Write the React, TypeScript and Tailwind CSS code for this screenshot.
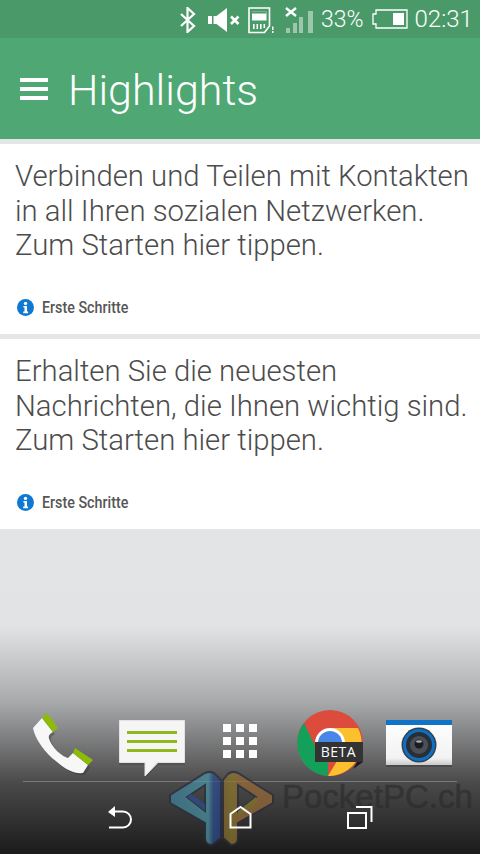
const roboto = "font-['Roboto',sans-serif]";

function InfoIcon() {
  return (
    <svg width="17" height="17" viewBox="0 0 17 17">
      <circle cx="8.5" cy="8.5" r="8.5" fill="#0f78d2" />
      <circle cx="8.5" cy="4.4" r="1.7" fill="#fff" />
      <path d="M6.4 7h3.6v5.6h1.1v1.6H6.2v-1.6h1.3V8.6H6.4z" fill="#fff" />
    </svg>
  );
}

function Card({ lines }: { lines: string[] }) {
  return (
    <div className="flex h-[190px] flex-col bg-white pl-[15px] pt-[15px]">
      <div className="text-[29.3px] font-light leading-[34.5px] text-[#4c4c4c]">
        {lines.map((l) => (
          <div key={l} className="whitespace-nowrap">{l}</div>
        ))}
      </div>
      <div className="mt-auto mb-[17px] flex items-center pl-[2px]">
        <InfoIcon />
        <span className="ml-[8px] origin-left scale-x-[0.84] whitespace-nowrap text-[17px] font-medium leading-[20px] text-[#565656]">
          Erste Schritte
        </span>
      </div>
    </div>
  );
}

function StatusBar() {
  return (
    <div className="flex h-[38px] items-center bg-[#4a9a69] pl-[179px] text-[24px] leading-none text-white">
      <svg width="17" height="26" viewBox="0 0 17 26" className="mr-[12px] mt-[2px]" fill="none" stroke="#fff" strokeWidth="2.2">
        <path d="M2 7l13 12-6.500 6V1l6.500 6L2 19" />
      </svg>
      <svg width="33" height="26" viewBox="0 0 33 26" className="mr-[7px] mt-[2px]" fill="#fff">
        <path d="M0 9h4v8H0zM5.500 9h3L19 1v24L8.500 17h-3z" />
        <path d="M23 9.500l7.500 7.500M30.500 9.500L23 17" stroke="#fff" strokeWidth="2.600" />
      </svg>
      <svg width="28" height="27" viewBox="0 0 28 27" className="mr-[9px] mt-[2px]" fill="none">
        <path d="M1 1h20.500v18l-5 6.500H1z" stroke="#fff" strokeWidth="1.600" />
        <path d="M4 4.500h14.500v9H4z" fill="#fff" />
        <path d="M4 4.500h14.500v2H4z" fill="#4a9a69" />
        <path d="M5 17h1.600v5H5zM8.500 17h1.600v5H8.500zM12 17h1.600v5H12zM15.500 17h1.600v4H15.500z" fill="#fff" />
        <path d="M24 19.500h1.500v3.500H24zM24 24h1.500v2H24z" fill="#fff" />
      </svg>
      <svg width="30" height="26" viewBox="0 0 30 26" className="mr-[5px] mt-[1px]" fill="#fff">
        <path d="M1 1l10 8M11 1L1 9" stroke="#fff" strokeWidth="2.400" />
        <path d="M1 21h4v5H1zM8 16h4v10H8zM14 10h4v16h-4zM23 4h5v22h-5z" fill="#9cc7ad" />
      </svg>
      <span className={`${roboto} ml-[1px] mr-[8px] text-[23px] font-light`}>33%</span>
      <svg width="36" height="20" viewBox="0 0 36 20" className="mr-[7px]" fill="none">
        <path d="M4 1h31v18H4v-4H1V5h3z" stroke="#fff" strokeWidth="1.300" />
        <path d="M21 4h11v12H21z" fill="#fff" />
      </svg>
      <span className={`${roboto} font-light`}>02:31</span>
    </div>
  );
}

function Phone() {
  const body = "M9 5L0 15C2 26 12 40 24 49C33 57 42 61 50 60L55 52L40 40L35 45C28 43 20 35 17 28C15 24 15 22 20 19Z";
  return (
    <svg width="60" height="60" viewBox="0 0 60 60" className="overflow-visible">
      <path d={body} fill="#333" opacity=".4" transform="translate(2 2)" />
      <path d={body} fill="#f7f7f7" />
      <path d="M14 0L25 15L20 19L9 5z" fill="#8cbb08" />
      <path d="M42 35L60 47L55 52L40 40z" fill="#8cbb08" />
    </svg>
  );
}

function Message() {
  return (
    <svg width="66" height="56" viewBox="0 0 66 56" className="overflow-visible">
      <path d="M0 2h66v43H39L26 58V45H0z" fill="#444" opacity=".45" />
      <path d="M0.500 0.500h65v42H39L26 56V42.500H0.500z" fill="#f5f5f5" stroke="#e2e2e2" />
      <path d="M8 11h50v3H8zM8 20h50v3H8zM8 29h50v3H8z" fill="#8fb81a" />
    </svg>
  );
}

function AppGrid() {
  return (
    <div className="grid grid-cols-3 gap-[5px]">
      {Array.from({ length: 9 }).map((_, i) => (
        <div key={i} className="h-[8px] w-[8px] bg-white" />
      ))}
    </div>
  );
}

function Chrome() {
  return (
    <div className="relative h-[66px] w-[66px]">
      <svg width="66" height="66" viewBox="0 0 66 66">
        <circle cx="33" cy="33" r="33" fill="#dc4b3c" />
        <path d="M33 18H61A33 33 0 0 1 31 66L46 41z" fill="#fbc02d" />
        <path d="M7 13L20 40 31 45 23 64.500A33 33 0 0 1 7 13z" fill="#12a05a" />
        <path d="M20 40L31 46 31 66 23 64.500z" fill="#12a05a" />
        <path d="M60 52L66 52 56 59z" fill="#1a1a1a" />
        <circle cx="33" cy="33" r="15" fill="#fff" />
        <circle cx="33" cy="33" r="12" fill="#4a86e8" />
      </svg>
      <div className="absolute left-[18px] top-[32px] flex h-[20px] w-[48px] items-center justify-center bg-[#333333] font-['Open_Sans',sans-serif] text-[14px] leading-none tracking-[0.5px] text-white">
        BETA
      </div>
    </div>
  );
}

function Camera() {
  return (
    <svg width="66" height="46" viewBox="0 0 66 46" className="overflow-visible">
      <defs>
        <linearGradient id="cam" x1="0" y1="0" x2="0" y2="1">
          <stop offset="0" stopColor="#ffffff" />
          <stop offset=".85" stopColor="#f2f2f2" />
          <stop offset="1" stopColor="#c8c8c8" />
        </linearGradient>
      </defs>
      <rect x="0" y="2" width="66" height="45" fill="#333" opacity=".45" />
      <rect width="66" height="45" fill="url(#cam)" />
      <rect width="66" height="5" fill="#0f74c7" />
      <circle cx="33" cy="25" r="17.500" fill="#33404e" />
      <circle cx="33" cy="25" r="16" fill="#0e70c4" />
      <circle cx="33" cy="25" r="13" fill="#2a2f36" />
      <circle cx="33" cy="25" r="9" fill="#4b5058" />
      <circle cx="33" cy="24" r="4.500" fill="#1a1c20" />
      <ellipse cx="33" cy="21.500" rx="3" ry="1.200" fill="#a8aeb6" />
    </svg>
  );
}

function Watermark() {
  return (
    <div className="pointer-events-none absolute left-[150px] top-[760px] flex items-start">
      <svg width="144" height="94" viewBox="0 0 144 94" opacity=".72">
        <defs>
          <linearGradient id="bl" x1="0" y1="0" x2="1" y2="0">
            <stop offset="0" stopColor="#3f7f99" />
            <stop offset=".75" stopColor="#4b96a4" />
            <stop offset=".85" stopColor="#2d4f8f" />
            <stop offset="1" stopColor="#2b468a" />
          </linearGradient>
          <linearGradient id="br" x1="0" y1="0" x2="1" y2="0">
            <stop offset="0" stopColor="#8a6a30" />
            <stop offset=".18" stopColor="#8c7a2c" />
            <stop offset=".32" stopColor="#9a6b35" />
            <stop offset="1" stopColor="#9a6a38" />
          </linearGradient>
        </defs>
        <path fillRule="evenodd" d="M20 35L55 13Q62 10 66 15L71 20V78L62 85Q55 85 55 78V63L20 43zM37 37L55 51V25z" fill="url(#bl)" stroke="#2a2f3d" strokeWidth="2" />
        <path d="M37 37L55 51V44L41 34z" fill="#2c4c8e" />
        <path fillRule="evenodd" d="M123 35L88 13Q81 10 77 15L73 20V78L81 85Q88 85 88 78V63L123 43zM106 37L88 51V25z" fill="url(#br)" stroke="#2a2f3d" strokeWidth="2" />
        <path d="M106 37L88 51V57L108 43z" fill="#8c7a2c" />
      </svg>
      <span className="ml-[-12px] mt-[17px] whitespace-nowrap font-['Liberation_Sans',sans-serif] text-[33px] font-normal leading-[40px] text-[#2a2a2a] opacity-60 [-webkit-text-stroke:0.6px_#2a2a2a]">
        PocketPC.ch
      </span>
    </div>
  );
}

export default function App() {
  return (
    <div className={`${roboto} relative flex h-[854px] w-[480px] flex-col overflow-hidden bg-[#e4e5e7]`}>
      <StatusBar />
      <div className="flex h-[101px] items-center bg-[#4fa873] pl-[20px] text-white">
        <div className="flex flex-col gap-[5px]">
          <div className="h-[4px] w-[28px] bg-white" />
          <div className="h-[4px] w-[28px] bg-white" />
          <div className="h-[4px] w-[28px] bg-white" />
        </div>
        <span className="ml-[20px] pt-[3px] text-[43px] font-light leading-none">Highlights</span>
      </div>
      <div className="mt-[5px] flex flex-col gap-[5px]">
        <Card lines={["Verbinden und Teilen mit Kontakten", "in all Ihren sozialen Netzwerken.", "Zum Starten hier tippen."]} />
        <Card lines={["Erhalten Sie die neuesten", "Nachrichten, die Ihnen wichtig sind.", "Zum Starten hier tippen."]} />
      </div>
      <div className="mt-auto flex h-[325px] flex-col justify-end bg-[linear-gradient(to_bottom,#e3e4e6_0%,#e2e3e5_30%,#a9aaac_53%,#4a4a4a_78%,#1b1b1b_100%)]">
        <div className="grid h-[71px] grid-cols-5 items-start pl-[18px] pr-[17px]">
          <div className="flex justify-center pt-[3px]"><Phone /></div>
          <div className="flex justify-center pt-[10px]"><Message /></div>
          <div className="flex justify-center pt-[14px] pr-[1px]"><AppGrid /></div>
          <div className="flex justify-center"><Chrome /></div>
          <div className="flex justify-center pt-[10px]"><Camera /></div>
        </div>
        <div className="mx-[23px] h-px bg-[#79797b]" />
        <div className="relative z-10 grid h-[72px] grid-cols-3 items-center px-[60px] pb-[1px]">
          <div className="flex justify-center">
            <svg width="24" height="23" viewBox="0 0 24 23" fill="none" stroke="#fff" strokeWidth="2">
              <path d="M5 5.500H15a8 8 0 0 1 0 16H1" />
              <path d="M0 6l7-6v11z" fill="#fff" stroke="none" />
            </svg>
          </div>
          <div className="flex justify-center">
            <svg width="23" height="23" viewBox="0 0 23 23" fill="none" stroke="#fff" strokeWidth="2">
              <path d="M1.500 8L11.500 1l10 7v13.500h-20z" />
            </svg>
          </div>
          <div className="flex justify-center">
            <svg width="26" height="23" viewBox="0 0 26 23" fill="none" stroke="#fff" strokeWidth="2">
              <path d="M1 7h18v15H1z" />
              <path d="M9 1h15.500v15" />
            </svg>
          </div>
        </div>
      </div>
      <Watermark />
    </div>
  );
}
